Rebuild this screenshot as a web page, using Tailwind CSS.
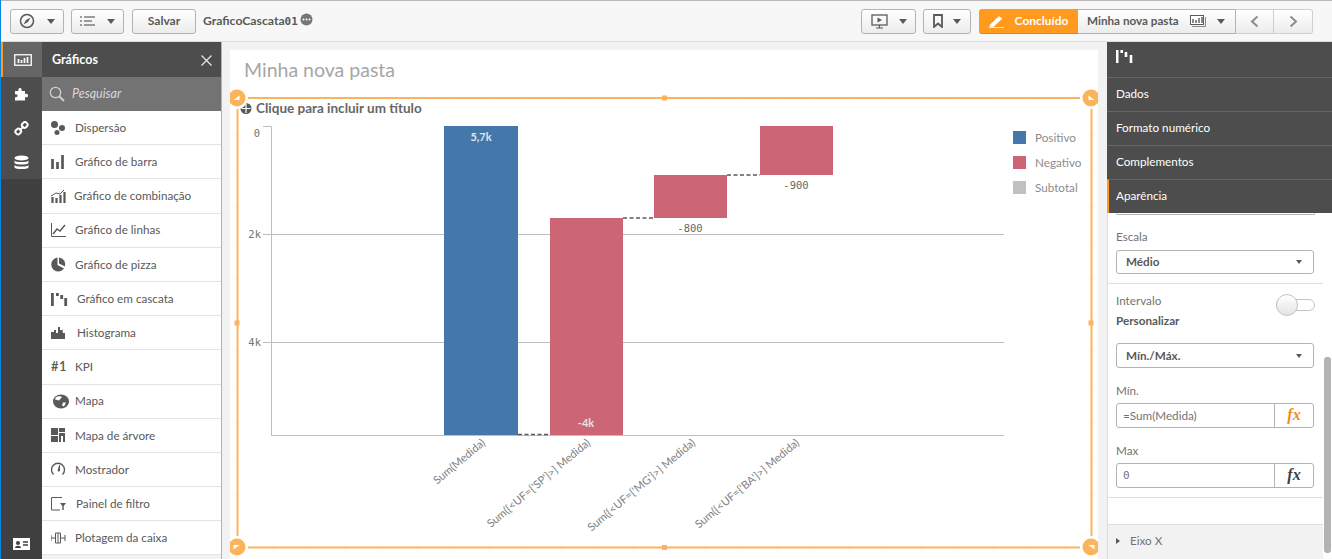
<!DOCTYPE html>
<html lang="en">
<head>
  <meta charset="UTF-8" />
  <meta name="viewport" content="width=device-width, initial-scale=1.0"/>
  <title>GraficoCascata01</title>
  <script src="https://cdn.jsdelivr.net/npm/@tailwindcss/browser@4"></script>
</head>
<body class="w-[1332px] h-[559px] overflow-hidden bg-[#f2f2f2] font-['Lato',sans-serif] text-[11.7px] text-[#595959]">
<div class="flex flex-col h-[559px] border-l border-l-[#0a84e0]">

  <!-- toolbar -->
  <div class="h-[42px] shrink-0 flex items-center pl-[9px] border-t border-t-[#b8b8b8] border-b border-b-[#dcdcdc] bg-[#f7f7f7]">
    <button class="w-[54px] h-[25px] flex items-center justify-center gap-[12px] rounded-[3px] border border-[#b3b3b3] bg-gradient-to-b from-white to-[#ececec]">
      <svg width="16" height="16" viewBox="0 0 16 16"><circle cx="8" cy="8" r="6.500" fill="none" stroke="#595959" stroke-width="1.500"/><path d="M11.500 4.500L9 9L4.500 11.500L7 7Z" fill="#595959"/></svg>
      <span class="w-0 h-0 border-x-[4.5px] border-x-transparent border-t-[5px] border-t-[#595959]"></span>
    </button>
    <button class="ml-[7px] w-[53px] h-[25px] flex items-center justify-center gap-[12px] rounded-[3px] border border-[#b3b3b3] bg-gradient-to-b from-white to-[#ececec]">
      <svg width="15" height="10" viewBox="0 0 15 10"><path d="M0 1h2M4 1h11M0 5h2M4 5h8M0 9h2M4 9h11" stroke="#404040" stroke-width="1"/></svg>
      <span class="w-0 h-0 border-x-[4.5px] border-x-transparent border-t-[5px] border-t-[#595959]"></span>
    </button>
    <button class="ml-[8px] w-[64px] h-[25px] rounded-[3px] border border-[#b3b3b3] bg-gradient-to-b from-white to-[#ececec] font-bold text-[12px] text-[#595959]">Salvar</button>
    <span class="ml-[7px] font-bold text-[#595959] text-[12.2px]">GraficoCascata<span class="font-['DejaVu_Sans_Mono',monospace] text-[11px]">01</span></span>
    <svg class="ml-[2px] mb-[3px]" width="13" height="13" viewBox="0 0 13 13"><circle cx="6.500" cy="6.500" r="6" fill="#777"/><circle cx="3.500" cy="6.500" r="1" fill="#fff"/><circle cx="6.500" cy="6.500" r="1" fill="#fff"/><circle cx="9.500" cy="6.500" r="1" fill="#fff"/></svg>

    <div class="ml-auto flex items-center pr-[19px]">
      <button class="w-[55px] h-[25px] flex items-center justify-center gap-[11px] rounded-[3px] border border-[#b3b3b3] bg-gradient-to-b from-white to-[#ececec]">
        <svg width="17" height="15" viewBox="0 0 17 15"><rect x="1" y="1" width="15" height="10" fill="none" stroke="#595959" stroke-width="1.300"/><path d="M6.500 3.500L11 6L6.500 8.500Z" fill="#595959"/><path d="M8.500 11v3M5 14h7" stroke="#595959" stroke-width="1.200"/></svg>
        <span class="w-0 h-0 border-x-[4.5px] border-x-transparent border-t-[5px] border-t-[#595959]"></span>
      </button>
      <button class="ml-[7px] w-[48px] h-[25px] flex items-center justify-center gap-[10px] rounded-[3px] border border-[#b3b3b3] bg-gradient-to-b from-white to-[#ececec]">
        <svg width="10" height="14" viewBox="0 0 10 14"><path d="M1 1h8v12L5 9.500 1 13Z" fill="none" stroke="#595959" stroke-width="1.800"/></svg>
        <span class="w-0 h-0 border-x-[4.5px] border-x-transparent border-t-[5px] border-t-[#595959]"></span>
      </button>
      <button class="ml-[8px] w-[99px] h-[25px] flex items-center justify-center gap-[10px] rounded-l-[3px] bg-[#ff9a1f] border-b border-b-[#e8850c] font-bold text-white text-[12px]">
        <svg width="16" height="14" viewBox="0 0 16 14"><path d="M1 11L10 2.500L13 4.500L4.500 12.500L1 13ZM0 13.500H15" fill="#fff" stroke="#fff" stroke-width="0.700"/></svg>
        Concluído
      </button>
      <div class="w-[158px] h-[25px] flex items-center pl-[9px] border-y border-r border-[#b3b3b3] bg-gradient-to-b from-white to-[#ececec] font-bold text-[#595959]">
        <span>Minha nova pasta</span>
        <svg class="ml-[11px]" width="16" height="12" viewBox="0 0 16 12"><rect x="0.500" y="0.500" width="13" height="9" fill="#fff" stroke="#595959"/><path d="M3 4v4M6 5v3M9 3v5M12 2v6" stroke="#595959" stroke-width="1.400"/><path d="M15.500 2v9.500H2" fill="none" stroke="#8a8a8a"/></svg>
        <span class="ml-[11px] w-0 h-0 border-x-[4.5px] border-x-transparent border-t-[5px] border-t-[#595959]"></span>
      </div>
      <button class="w-[38px] h-[25px] flex items-center justify-center border-y border-r border-[#cfcfcf] bg-gradient-to-b from-white to-[#ececec]">
        <svg width="9" height="13" viewBox="0 0 9 13"><path d="M7.500 1.500L2 6.500L7.500 11.500" fill="none" stroke="#8c8c8c" stroke-width="2"/></svg>
      </button>
      <button class="w-[39px] h-[25px] flex items-center justify-center rounded-r-[3px] border-y border-r border-[#cfcfcf] bg-gradient-to-b from-white to-[#ececec]">
        <svg width="9" height="13" viewBox="0 0 9 13"><path d="M1.500 1.500L7 6.500L1.500 11.500" fill="none" stroke="#8c8c8c" stroke-width="2"/></svg>
      </button>
    </div>
  </div>

  <div class="flex flex-1 min-h-0">
    <!-- icon rail -->
    <div class="w-[41px] shrink-0 flex flex-col bg-[#404040]">
      <div class="h-[35px] flex items-center justify-center bg-[#666666] border-l-2 border-l-[#ff9a1f]">
        <svg width="18" height="12" viewBox="0 0 18 12"><rect x="0.750" y="0.750" width="16.500" height="10.500" fill="none" stroke="#fff" stroke-width="1.300"/><path d="M4.500 5v4M7.500 6v3M10.500 4v5M13.500 3v6" stroke="#fff" stroke-width="1.700"/></svg>
      </div>
      <div class="h-[34px] flex items-center justify-center bg-[#4d4d4d]">
        <svg width="15" height="15" viewBox="0 0 15 15"><path d="M1 4h3.500C4 2.500 4.500 1 6 1s2 1.500 1.500 3H11v3c1.500-.5 3-.5 3 1.500S12.500 10.500 11 10v3.500H1V10c1.500.5 2.500 0 2.500-1.200S2 7 1 7.500Z" fill="#fff"/></svg>
      </div>
      <div class="h-[34px] flex items-center justify-center bg-[#4d4d4d]">
        <svg width="15" height="15" viewBox="0 0 15 15"><g fill="none" stroke="#fff" stroke-width="2"><rect x="8" y="1.500" width="5.500" height="5" rx="2" transform="rotate(-45 10.700 4)"/><rect x="1.500" y="8" width="5.500" height="5" rx="2" transform="rotate(-45 4.300 10.500)"/></g><path d="M5.500 9.500L9.500 5.500" stroke="#fff" stroke-width="1.800"/></svg>
      </div>
      <div class="h-[34px] flex items-center justify-center bg-[#4d4d4d]">
        <svg width="15" height="15" viewBox="0 0 15 15"><ellipse cx="7.500" cy="3" rx="7" ry="2.500" fill="#fff"/><path d="M.5 5.500c1 2 13 2 14 0v2.500c-1 2-13 2-14 0ZM.5 10c1 2 13 2 14 0v2.500c-1 2-13 2-14 0Z" fill="#fff"/></svg>
      </div>
      <div class="mt-auto h-[30px] flex items-center justify-center">
        <svg width="17" height="12" viewBox="0 0 17 12"><rect width="17" height="12" fill="#fff"/><circle cx="5" cy="5" r="2" fill="#404040"/><path d="M2 10c0-3 6-3 6 0Z" fill="#404040"/><path d="M10 4h5M10 7h5" stroke="#404040" stroke-width="1.300"/></svg>
      </div>
    </div>

    <!-- charts panel -->
    <div class="w-[180px] shrink-0 flex flex-col border-r border-r-[#b3b3b3]">
      <div class="h-[35px] flex items-center justify-between pl-[10px] pr-[9px] pt-[1px] bg-[#4d4d4d] text-white font-bold text-[12.5px]">
        <span>Gráficos</span>
        <svg width="11" height="11" viewBox="0 0 11 11"><path d="M.5.500l10 10M10.500.500l-10 10" stroke="#e6e6e6" stroke-width="1.300"/></svg>
      </div>
      <div class="h-[34px] flex items-center pl-[7px] gap-[7px] bg-[#737373] text-[#d9d9d9] text-[12.5px] italic">
        <svg width="16" height="16" viewBox="0 0 16 16"><circle cx="6.500" cy="6.500" r="5.200" fill="none" stroke="#d0d0d0" stroke-width="1.300"/><path d="M10.500 10.500L15 15" stroke="#d0d0d0" stroke-width="1.800"/></svg>
        Pesquisar
      </div>
      <div class="bg-white">
        <div class="h-[34.2px] flex items-center pl-[9px] border-b border-[#e3e3e3]"><svg class="w-[24px]" height="14" viewBox="0 0 24 14" preserveAspectRatio="xMinYMid"><circle cx="3.500" cy="3.500" r="3.500" fill="#595959"/><circle cx="11" cy="7" r="3" fill="#595959"/><circle cx="6" cy="11.500" r="2.500" fill="#595959"/></svg>Dispersão</div>
        <div class="h-[34.2px] flex items-center pl-[9px] border-b border-[#e3e3e3]"><svg class="w-[24px]" height="14" viewBox="0 0 24 14" preserveAspectRatio="xMinYMid"><path d="M1.500 4v10M6.500 7v7M11.500 0v14" stroke="#595959" stroke-width="2.700"/></svg>Gráfico de barra</div>
        <div class="h-[34.2px] flex items-center pl-[9px] border-b border-[#e3e3e3]"><svg class="w-[23px]" height="14" viewBox="0 0 23 14" preserveAspectRatio="xMinYMid"><path d="M1.500 8v6M5.500 9v5M9.500 6v8M13.500 3v11" stroke="#595959" stroke-width="2.200"/><path d="M0 7L5 4L9 5L13 1" fill="none" stroke="#595959"/></svg>Gráfico de combinação</div>
        <div class="h-[34.2px] flex items-center pl-[9px] border-b border-[#e3e3e3]"><svg class="w-[24px]" height="14" viewBox="0 0 24 14" preserveAspectRatio="xMinYMid"><path d="M.5 0v13.500H15" fill="none" stroke="#595959"/><path d="M2 11L6 6L9 8L14 2" fill="none" stroke="#595959" stroke-width="1.500"/></svg>Gráfico de linhas</div>
        <div class="h-[34.2px] flex items-center pl-[9px] border-b border-[#e3e3e3]"><svg class="w-[24px]" height="15" viewBox="0 0 24 15" preserveAspectRatio="xMinYMid"><path d="M6.500.5A7 7 0 1 0 13 11.500L6.500 8Z" fill="#595959"/><path d="M8 0.500A7 7 0 0 1 14 9.500L8 6.500Z" fill="#595959"/></svg>Gráfico de pizza</div>
        <div class="h-[34.2px] flex items-center pl-[9px] border-b border-[#e3e3e3]"><svg class="w-[26px]" height="14" viewBox="0 0 26 14" preserveAspectRatio="xMinYMid"><path d="M1.400 1v13M6.400 1v3M10.700 3v4M14.700 6v8" stroke="#595959" stroke-width="2.800"/></svg>Gráfico em cascata</div>
        <div class="h-[34.2px] flex items-center pl-[9px] border-b border-[#e3e3e3]"><svg class="w-[26px]" height="13" viewBox="0 0 26 13" preserveAspectRatio="xMinYMid"><path d="M0 13V6h3V4h2v3h2V1h2v3h2V2l1 5h2v6Z" fill="#595959"/></svg>Histograma</div>
        <div class="h-[34.2px] flex items-center pl-[9px] border-b border-[#e3e3e3]"><span class="w-[24px] font-semibold text-[13px] tracking-[0.5px]">#1</span>KPI</div>
        <div class="h-[34.2px] flex items-center pl-[9px] border-b border-[#e3e3e3]"><svg class="w-[24px]" height="15" viewBox="0 0 24 15" preserveAspectRatio="xMinYMid"><ellipse cx="10" cy="7.500" rx="8" ry="7" fill="#595959"/><path d="M5 3c2-1 5-1 6 0L8 6.500 4 5.500ZM12 8.500l3 0-2 4-2-1Z" fill="#fff"/></svg>Mapa</div>
        <div class="h-[34.2px] flex items-center pl-[9px] border-b border-[#e3e3e3]"><svg class="w-[24px]" height="14" viewBox="0 0 24 14" preserveAspectRatio="xMinYMid"><path d="M0 0h7v7H0ZM0 8h7v6H0ZM8 0h6v4H8ZM8 5h6v9h-2V8h-2v6H8Z" fill="#595959"/></svg>Mapa de árvore</div>
        <div class="h-[34.2px] flex items-center pl-[9px] border-b border-[#e3e3e3]"><svg class="w-[24px]" height="14" viewBox="0 0 24 14" preserveAspectRatio="xMinYMid"><path d="M2.500 12.500A6.500 6.500 0 1 1 11.500 12.500" fill="none" stroke="#595959" stroke-width="1.400"/><path d="M7 9L8.500 3.500L8.500 9Z" fill="#595959" stroke="#595959"/></svg>Mostrador</div>
        <div class="h-[34.2px] flex items-center pl-[9px] border-b border-[#e3e3e3]"><svg class="w-[25px]" height="14" viewBox="0 0 25 14" preserveAspectRatio="xMinYMid"><path d="M11 .500H.5v12.500H9" fill="none" stroke="#595959"/><path d="M9 6h6l-2.300 3v4h-1.400V9Z" fill="#595959"/></svg>Painel de filtro</div>
        <div class="h-[34.2px] flex items-center pl-[9px] border-b border-[#e3e3e3]"><svg class="w-[24px]" height="14" viewBox="0 0 24 14" preserveAspectRatio="xMinYMid"><path d="M0 4v6M0 7h4M14 4v6M10 7h4M4.500 2h5v10h-5ZM7 2v10" fill="none" stroke="#595959"/></svg>Plotagem da caixa</div>
      </div>
      <div class="flex-1 bg-[#f2f2f2]"></div>
    </div>

    <!-- sheet -->
    <div class="flex-1 min-w-0 pt-[8px] pl-[8px] pr-[9px]">
      <div class="relative h-full bg-white">
        <div class="pl-[14px] pt-[7px] text-[19.5px] leading-[26px] text-[#a6a6a6]">Minha nova pasta</div>
        <svg class="absolute left-0 top-0" width="868" height="509" viewBox="230 50 868 509" font-family="Lato, sans-serif">
          <!-- title -->
          <circle cx="246" cy="108.500" r="5.500" fill="#595959"/><path d="M246 104v9M241.500 108.500h9" stroke="#fff" stroke-width="1.200"/>
          <text x="256" y="113" font-size="13.500" font-weight="700" fill="#666">Clique para incluir um título</text>
          <!-- axes -->
          <path d="M263 126.500H271.500V435M263 234.500H1004M263 342.500H1004M271 435.500H1004" fill="none" stroke="#bfbfbf"/>
          <g font-family="DejaVu Sans Mono, monospace" font-size="10.500" fill="#737373" text-anchor="end">
            <text x="260" y="137">0</text><text x="261" y="238">2k</text><text x="261" y="346">4k</text>
          </g>
          <!-- bars -->
          <rect x="444" y="126" width="74" height="309" fill="#4477aa"/>
          <rect x="550" y="218" width="73" height="217" fill="#cc6677"/>
          <rect x="654" y="175" width="73" height="43" fill="#cc6677"/>
          <rect x="760" y="126" width="73" height="49" fill="#cc6677"/>
          <path d="M518 434.500H550M623 218H654M727 175H760" stroke="#595959" stroke-width="1.500" stroke-dasharray="4 2.500"/>
          <text x="481" y="141" font-size="11" font-weight="700" fill="#e4e4e4" text-anchor="middle">5,7k</text>
          <text x="586" y="427" font-size="11" font-weight="700" fill="#e4e4e4" text-anchor="middle">-4k</text>
          <g font-family="DejaVu Sans Mono, monospace" font-size="10.500" fill="#666" text-anchor="middle">
            <text x="690" y="232">-800</text><text x="796" y="189">-900</text>
          </g>
          <!-- legend -->
          <rect x="1013" y="131" width="13" height="13" fill="#4477aa"/>
          <rect x="1013" y="156" width="13" height="13" fill="#cc6677"/>
          <rect x="1013" y="181" width="13" height="13" fill="#c0c0c0"/>
          <g font-size="11.700" fill="#8c8c8c">
            <text x="1035" y="142">Positivo</text><text x="1035" y="167">Negativo</text><text x="1035" y="192">Subtotal</text>
          </g>
          <!-- x labels -->
          <g font-size="11.100" fill="#808080" text-anchor="end">
            <text transform="translate(486 444) rotate(-40)">Sum(Medida)</text>
            <text transform="translate(591 444) rotate(-40)">Sum({&lt;UF={'SP'}&gt;} Medida)</text>
            <text transform="translate(696 444) rotate(-40)">Sum({&lt;UF={'MG'}&gt;} Medida)</text>
            <text transform="translate(800 444) rotate(-40)">Sum({&lt;UF={'BA'}&gt;} Medida)</text>
          </g>
          <!-- frame ticks -->
          <g stroke="#e4e4e4" fill="none">
            <path d="M237 96H1091M237 550H1091" stroke-dasharray="1 35"/>
            <path d="M234 98V547M1094 98V547" stroke-dasharray="1 35"/>
          </g>
          <!-- selection frame -->
          <g fill="#fbb45c">
            <rect x="237" y="97" width="855" height="2"/><rect x="237" y="546.500" width="855" height="2"/>
            <rect x="236.500" y="97" width="2" height="451"/><rect x="1090.500" y="97" width="2" height="451"/>
            <rect x="662" y="95.500" width="5" height="5"/><rect x="662" y="545" width="5" height="5"/>
            <rect x="234.500" y="320.500" width="5" height="5"/><rect x="1088.500" y="320.500" width="5" height="5"/>
          </g>
          <g fill="#fff">
            <circle cx="237" cy="98" r="11"/><circle cx="1091" cy="98" r="11"/><circle cx="237" cy="547" r="11"/><circle cx="1091" cy="547" r="11"/>
          </g>
          <g fill="#fbb45c">
            <circle cx="237" cy="98" r="8.500"/><circle cx="1091" cy="98" r="8.500"/><circle cx="237" cy="547" r="8.500"/><circle cx="1091" cy="547" r="8.500"/>
          </g>
          <g fill="#fff">
            <path d="M233.500 100L239.500 95.500V100Z"/><path d="M1088.500 95.500L1094.500 100H1088.500Z"/><path d="M233.500 545H239.500L233.500 549.500Z"/><path d="M1088.500 545H1094.500V549.500Z"/>
          </g>
        </svg>
      </div>
    </div>

    <!-- properties panel -->
    <div class="relative w-[225px] shrink-0 flex flex-col bg-white">
      <div class="h-[35px] flex items-center pl-[9px] bg-[#4d4d4d]">
        <svg width="17" height="13" viewBox="0 0 17 13" class="mb-[6px]"><path d="M1.200 0v13M5.700 0v3M10 2v5M15 5v8" stroke="#fff" stroke-width="2.600"/></svg>
      </div>
      <div class="h-[34px] flex items-center pl-[9px] pb-[2px] bg-[#4d4d4d] border-t border-[#666] text-white">Dados</div>
      <div class="h-[34px] flex items-center pl-[9px] pb-[2px] bg-[#4d4d4d] border-t border-[#666] text-white">Formato numérico</div>
      <div class="h-[34px] flex items-center pl-[9px] pb-[2px] bg-[#4d4d4d] border-t border-[#666] text-white">Complementos</div>
      <div class="h-[34px] flex items-center pl-[7px] pb-[2px] bg-[#4d4d4d] border-t border-[#666] border-l-2 border-l-[#ff9a1f] text-white">Aparência</div>

      <div class="flex-1 flex flex-col min-h-0 border-l border-l-[#dcdcdc]">
        <div class="h-[2px] ml-[8px] mr-[17px] border border-t-0 border-[#b3b3b3] rounded-b-[3px]"></div>
        <div class="pl-[8px] pr-[17px] pt-[13px] pb-[9px] border-b border-[#dedede] mr-[9px]">
          <div class="h-[16px] leading-[16px] text-[#737373]">Escala</div>
          <div class="mt-[6px] h-[24px] flex items-center justify-between pl-[9px] pr-[11px] mr-[-8px] rounded-[3px] border border-[#b3b3b3] font-bold">
            <span>Médio</span><span class="w-0 h-0 border-x-[3.500px] border-x-transparent border-t-[4px] border-t-[#595959]"></span>
          </div>
        </div>
        <div class="relative pl-[8px] pr-[9px] pt-[8px] border-b border-[#dedede] h-[214px] mr-[9px]">
          <div class="h-[16px] leading-[16px] text-[#737373]">Intervalo</div>
          <div class="mt-[4px] h-[16px] leading-[16px] font-bold">Personalizar</div>
          <div class="absolute left-[168px] top-[15px] w-[39px] h-[12px] rounded-full border border-[#c4c4c4] bg-white"></div>
          <div class="absolute left-[168px] top-[10px] w-[22px] h-[22px] rounded-full border border-[#c4c4c4] bg-gradient-to-b from-white to-[#e4e4e4]"></div>
          <div class="mt-[15px] h-[25px] flex items-center justify-between pl-[9px] pr-[11px] rounded-[3px] border border-[#b3b3b3] font-bold">
            <span>Mín./Máx.</span><span class="w-0 h-0 border-x-[3.500px] border-x-transparent border-t-[4px] border-t-[#595959]"></span>
          </div>
          <div class="mt-[14px] h-[16px] leading-[16px] text-[#737373]">Mín.</div>
          <div class="mt-[5px] h-[25px] flex rounded-[3px] border border-[#b3b3b3]">
            <span class="flex-1 pl-[6px] leading-[23px] text-[#737373]">=Sum(Medida)</span>
            <span class="w-[39px] border-l border-[#b3b3b3] text-center font-['Liberation_Serif',serif] italic font-bold text-[16px] leading-[22px] text-[#f28c1e]">fx</span>
          </div>
          <div class="mt-[14px] h-[16px] leading-[16px] text-[#737373]">Max</div>
          <div class="mt-[5px] h-[25px] flex rounded-[3px] border border-[#b3b3b3]">
            <span class="flex-1 pl-[6px] leading-[23px] text-[#737373] font-['DejaVu_Sans_Mono',monospace] text-[11px]">0</span>
            <span class="w-[39px] border-l border-[#b3b3b3] text-center font-['Liberation_Serif',serif] italic font-bold text-[16px] leading-[22px] text-[#404040]">fx</span>
          </div>
        </div>
        <div class="flex-1"></div>
        <div class="h-[35px] mr-[9px] flex items-center pl-[8px] pb-[2px] gap-[10px] bg-[#f2f2f2] border-t border-[#dedede] text-[#737373]">
          <span class="w-0 h-0 border-y-[3.500px] border-y-transparent border-l-[4px] border-l-[#595959]"></span>Eixo X
        </div>
      </div>
      <div class="absolute right-[1px] top-[315px] w-[7px] h-[196px] rounded-[3px] bg-[#b3b3b3]"></div>
    </div>
  </div>
</div>
</body>
</html>
